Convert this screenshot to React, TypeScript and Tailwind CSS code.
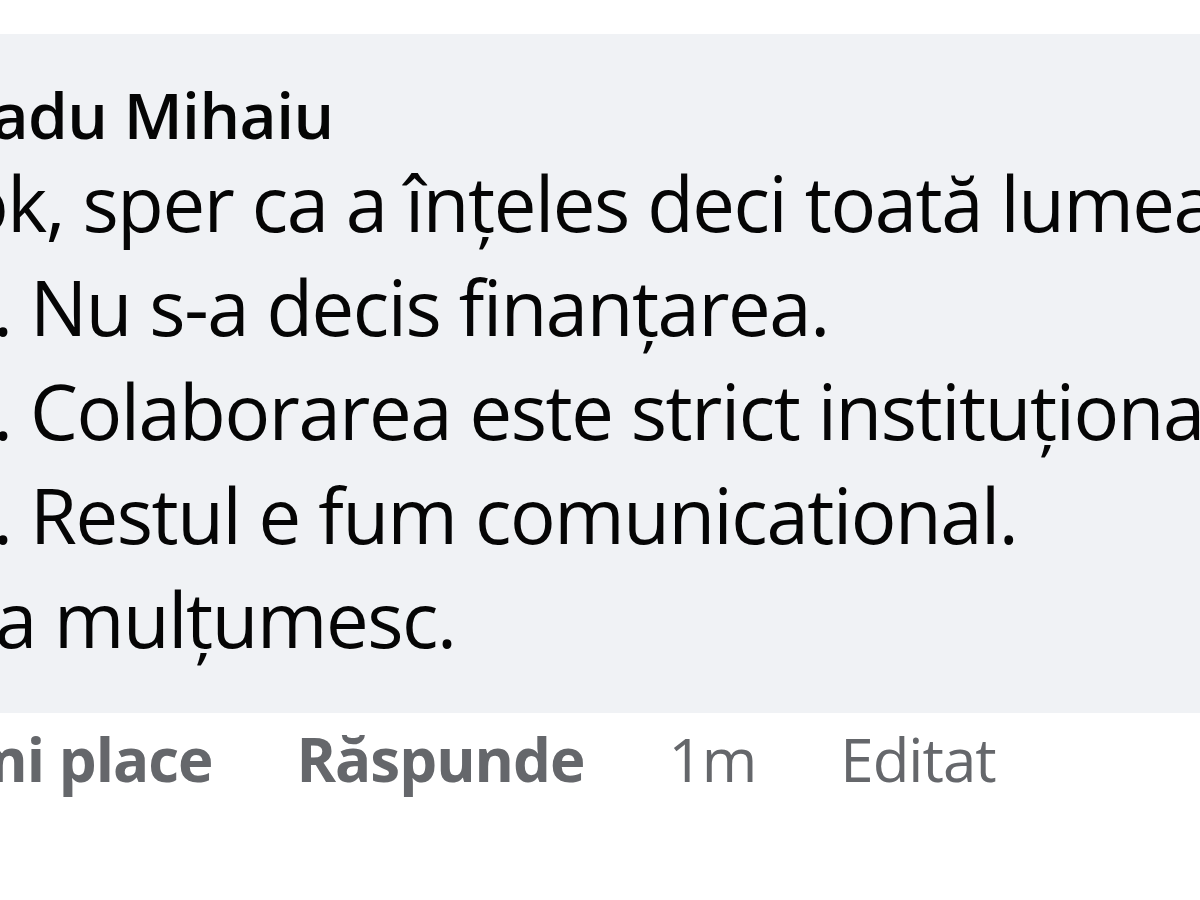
import React from 'react';

const lines = [
  'ok, sper ca a înțeles deci toată lumea:',
  '1. Nu s-a decis finanțarea.',
  '2. Colaborarea este strict instituțională.',
  '3. Restul e fum comunicational.',
  'Va mulțumesc.',
];

const actions = [
  { label: 'Îmi place', bold: true },
  { label: 'Răspunde', bold: true },
  { label: '1m', bold: false },
  { label: 'Editat', bold: false },
];

export default function App() {
  return (
    <div
      className="w-[1200px] h-[900px] bg-white overflow-hidden"
      style={{ fontFamily: '"Open Sans", "Noto Sans", sans-serif' }}
    >
      <div className="ml-[-95px] pt-[34px]">
        {/* bulă comentariu */}
        <div className="w-[1500px] bg-[#f0f2f5] rounded-[90px] pl-[46px] pt-[45px] pb-[42px] text-[#050505] whitespace-nowrap">
          <div className="text-[64px] leading-[72px] font-semibold tracking-[-0.5px]">Radu Mihaiu</div>
          {lines.map((line, i) => (
            <div
              key={i}
              className={i === 0 ? 'pl-[12px] text-[76px] leading-[104px] tracking-[-1.4px]' : 'text-[76px] leading-[104px] tracking-[-1.4px]'}
            >
              {line}
            </div>
          ))}
        </div>
        <div className="flex items-center gap-[84px] pl-[45px] mt-[6px] text-[60px] leading-[80px] tracking-[-1px] text-[#65676b] whitespace-nowrap">
          {actions.map((a) => (
            <span key={a.label} className={a.bold ? 'font-bold' : 'font-normal'}>
              {a.label}
            </span>
          ))}
        </div>
      </div>
    </div>
  );
}
